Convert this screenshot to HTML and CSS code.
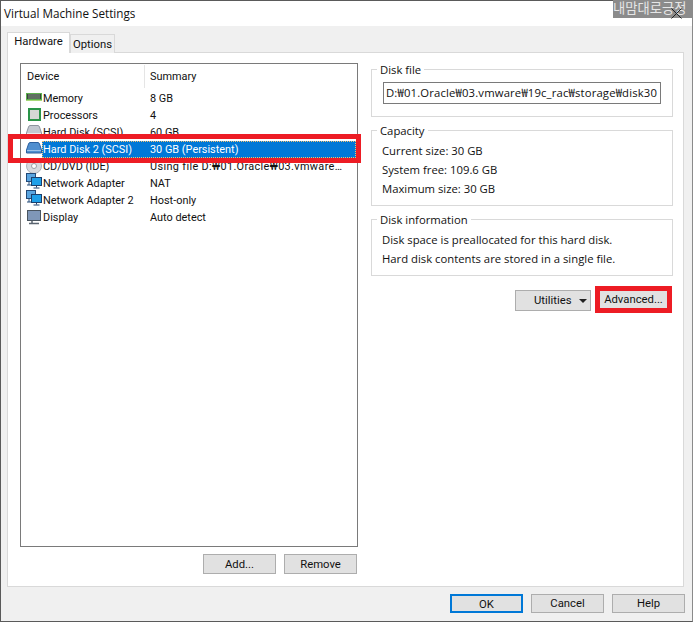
FILE: index.html
```html
<!DOCTYPE html>
<html lang="ko">
<head>
<meta charset="utf-8">
<title>Virtual Machine Settings</title>
<link rel="stylesheet" href="styles.css">
</head>
<body>
<div class="window">
  <div class="titlebar">Virtual Machine Settings</div>
  <div class="tabs">
    <div class="tab tab-active">Hardware</div>
    <div class="tab">Options</div>
  </div>
  <div class="pane">
    <div class="left">
      <div class="list">
        <div class="list-head">
          <div class="head-device">Device</div>
          <div class="head-summary">Summary</div>
        </div>
        <div class="row">
          <svg class="icon" viewBox="0 0 16 16"><rect x="0" y="3" width="16" height="8" fill="#5cb04c"/><rect x="1" y="4" width="14" height="5" fill="#36443a"/><path d="M3 4v5M5 4v5M7 4v5M9 4v5M11 4v5M13 4v5" stroke="#8b9a8b"/><path d="M0 10.500h16" stroke="#a8d878"/></svg>
          <div class="cells"><span class="name">Memory</span><span class="summary">8 GB</span></div>
        </div>
        <div class="row">
          <svg class="icon" viewBox="0 0 16 16"><rect x="2" y="1" width="13" height="13" fill="#2a9448"/><rect x="4" y="3" width="9" height="9" fill="#d4d8d4"/></svg>
          <div class="cells"><span class="name">Processors</span><span class="summary">4</span></div>
        </div>
        <div class="row">
          <svg class="icon" viewBox="0 0 16 16"><path d="M4 1.500h8q1 0 1.500 1.500l2 6v3H.5V9l2-6q.5-1.500 1.500-1.500z" fill="#c3c8d0" stroke="#8d949e"/><path d="M1 9.500h14" stroke="#e9ebee"/></svg>
          <div class="cells"><span class="name">Hard Disk (SCSI)</span><span class="summary">60 GB</span></div>
        </div>
        <div class="row row-selected">
          <svg class="icon" viewBox="0 0 16 16"><path d="M4 1.500h8q1 0 1.500 1.500l2 6v3H.5V9l2-6q.5-1.500 1.500-1.500z" fill="#4f8fd0" stroke="#2a5f9e"/><path d="M1 9.500h14" stroke="#9cc4ea"/></svg>
          <div class="cells"><span class="name">Hard Disk 2 (SCSI)</span><span class="summary">30 GB (Persistent)</span></div>
        </div>
        <div class="row">
          <svg class="icon" viewBox="0 0 16 16"><circle cx="8" cy="8" r="7.500" fill="#d8dade" stroke="#aeb2b8"/><circle cx="8" cy="8" r="2.500" fill="#fff" stroke="#9a9ea4"/></svg>
          <div class="cells"><span class="name">CD/DVD (IDE)</span><span class="summary summary-long">Using file D:₩01.Oracle₩03.vmware…</span></div>
        </div>
        <div class="row">
          <svg class="icon icon-net" viewBox="0 0 16 16"><rect x="0.500" y="0.500" width="9" height="8" fill="#5aa5e0" stroke="#234a78"/><path d="M3 9v3M1 12h6" stroke="#234a78"/><rect x="5.500" y="4.500" width="10" height="8" fill="#1f9fe8" stroke="#1c3f6c"/><path d="M10.500 13v1.500M7.500 15h6" stroke="#1c3f6c"/></svg>
          <div class="cells"><span class="name">Network Adapter</span><span class="summary">NAT</span></div>
        </div>
        <div class="row">
          <svg class="icon icon-net" viewBox="0 0 16 16"><rect x="0.500" y="0.500" width="9" height="8" fill="#5aa5e0" stroke="#234a78"/><path d="M3 9v3M1 12h6" stroke="#234a78"/><rect x="5.500" y="4.500" width="10" height="8" fill="#1f9fe8" stroke="#1c3f6c"/><path d="M10.500 13v1.500M7.500 15h6" stroke="#1c3f6c"/></svg>
          <div class="cells"><span class="name">Network Adapter 2</span><span class="summary">Host-only</span></div>
        </div>
        <div class="row">
          <svg class="icon" viewBox="0 0 16 16"><rect x="1.500" y="1.500" width="13" height="10" fill="#7f97b8" stroke="#4a5560"/><path d="M6 12v2M3 14.500h10" stroke="#5a6470" stroke-width="1.500"/></svg>
          <div class="cells"><span class="name">Display</span><span class="summary">Auto detect</span></div>
        </div>
      </div>
      <div class="list-actions">
        <button class="btn">Add...</button>
        <button class="btn">Remove</button>
      </div>
    </div>
    <div class="right">
      <fieldset class="group group-file">
        <legend>Disk file</legend>
        <div class="path">D:₩01.Oracle₩03.vmware₩19c_rac₩storage₩disk30</div>
      </fieldset>
      <fieldset class="group group-capacity">
        <legend>Capacity</legend>
        <div class="line">Current size: 30 GB</div>
        <div class="line">System free: 109.6 GB</div>
        <div class="line">Maximum size: 30 GB</div>
      </fieldset>
      <fieldset class="group group-info">
        <legend>Disk information</legend>
        <div class="line">Disk space is preallocated for this hard disk.</div>
        <div class="line">Hard disk contents are stored in a single file.</div>
      </fieldset>
      <div class="disk-actions">
        <button class="btn btn-utilities">Utilities<span class="caret"></span></button>
        <button class="btn btn-advanced">Advanced...</button>
      </div>
    </div>
  </div>
  <div class="footer">
    <button class="btn btn-default">OK</button>
    <button class="btn">Cancel</button>
    <button class="btn">Help</button>
  </div>
  <div class="highlight"></div>
  <div class="watermark">내맘대로긍정</div>
  <svg class="close" viewBox="0 0 11 11"><path d="M.5.5l10 10M10.500.5l-10 10" stroke="#222" fill="none"/></svg>
</div>
</body>
</html>
```
FILE: styles.css
```css
* { box-sizing: border-box; }
html, body { margin: 0; padding: 0; }
body {
  width: 693px;
  height: 622px;
  overflow: hidden;
  font-family: "Open Sans", "Noto Sans CJK KR", sans-serif;
  font-size: 11.3px;
  color: #111;
}
.window {
  position: relative;
  width: 693px;
  height: 622px;
  display: flex;
  flex-direction: column;
  background: #f0f0f0;
  border: 1px solid #5a5a5a;
  border-right-color: #8a8a8a;
}
.titlebar {
  height: 25px;
  background: #fff;
  padding-left: 3px;
  line-height: 24px;
  font-size: 11.700px;
}
.tabs {
  display: flex;
  align-items: flex-end;
  height: 21px;
  margin-top: 6px;
  padding-left: 6px;
  position: relative;
  z-index: 1;
  font-family: Roboto, sans-serif;
  font-size: 11.300px;
}
.tab {
  height: 19px;
  width: 45px;
  margin-left: -1px;
  border: 1px solid #d9d9d9;
  border-bottom: 0;
  background: #f0f0f0;
  text-align: center;
  line-height: 20px;
}
.tab-active {
  height: 21px;
  width: 63px;
  margin-left: 0;
  margin-right: 1px;
  background: #fff;
  line-height: 18px;
}
.pane {
  width: 677px;
  height: 535px;
  margin-left: 6px;
  margin-top: -1px;
  padding: 7px 0 0 12px;
  background: #fff;
  border: 1px solid #d9d9d9;
  display: flex;
  gap: 13px;
}
.left { width: 338px; margin-top: 3px; }
.list {
  height: 484px;
  border: 1px solid #7a7a7a;
  background: #fff;
  font-family: Roboto, sans-serif;
  font-size: 10.900px;
}
.list-head { display: flex; height: 26px; padding-top: 1px; }
.head-device {
  width: 124px;
  height: 23px;
  padding-left: 6px;
  line-height: 24px;
  border-right: 1px solid #e5e5e5;
}
.head-summary { padding-left: 5px; line-height: 24px; }
.row {
  display: flex;
  height: 17px;
  padding-left: 5px;
  padding-right: 1px;
  line-height: 18px;
  white-space: nowrap;
}
.icon { width: 16px; height: 16px; flex: none; }
.icon-net { margin-top: -2px; }
.cells { display: flex; flex: 1; min-width: 0; height: 17px; }
.name { width: 108px; padding-left: 1px; }
.summary-long { letter-spacing: 0.350px; }
.row-selected .cells {
  background: #0078d7;
  color: #fff;
  outline: 1px dotted #f0c070;
  outline-offset: -1px;
}
.list-actions {
  display: flex;
  justify-content: flex-end;
  gap: 8px;
  margin-top: 7px;
  padding-right: 1px;
}
.btn {
  width: 73px;
  height: 20px;
  padding: 0;
  font-family: Roboto, sans-serif;
  font-size: 11.300px;
  color: inherit;
  background: #e1e1e1;
  border: 1px solid #adadad;
  line-height: 17px;
}
.right { width: 302px; }
.group {
  margin: 0;
  padding: 4px 0 0 11px;
  border: 1px solid #d9d9d9;
  min-width: 0;
}
.group legend {
  margin-left: -6px;
  padding: 2px 3px 0;
  line-height: 16px;
}
.group-file { height: 57px; }
.path {
  width: 278px;
  height: 22px;
  padding-left: 2px;
  border: 1px solid #7a7a7a;
  line-height: 20px;
  white-space: nowrap;
  overflow: hidden;
  letter-spacing: 0.160px;
}
.group-capacity { margin-top: 4px; height: 85px; padding-top: 2px; padding-left: 10px; }
.group-capacity legend, .group-info legend { margin-left: -5px; }
.group-info { margin-top: 4px; height: 66px; padding-top: 2px; padding-left: 10px; }
.line { height: 19px; line-height: 19px; }
.disk-actions {
  display: flex;
  align-items: flex-start;
  justify-content: flex-end;
  gap: 4px;
  margin-top: 10px;
  padding-right: 1px;
}
.btn-utilities { width: 76px; height: 21px; margin-top: 4px; text-align: left; padding-left: 18px; }
.caret {
  display: inline-block;
  margin-left: 7px;
  vertical-align: 1px;
  border: 4px solid transparent;
  border-top: 4px solid #222;
  border-bottom: 0;
}
.btn-advanced {
  width: 77px;
  height: 27px;
  border: 5px solid #ed1c24;
  line-height: 15px;
}
.footer {
  display: flex;
  justify-content: flex-end;
  gap: 8px;
  padding: 7px 7px 0 0;
}
.footer .btn { height: 19px; }
.btn-default { border: 2px solid #0078d7; }
.highlight {
  position: absolute;
  left: 7px;
  top: 133px;
  width: 353px;
  height: 29px;
  border: 5px solid #ed1c24;
}
.watermark {
  position: absolute;
  top: -1px;
  right: -1px;
  width: 80px;
  height: 18px;
  background: #8b8b8b;
  color: #e6e6e6;
  font-size: 13.300px;
  line-height: 17px;
  white-space: nowrap;
  overflow: hidden;
}
.close {
  position: absolute;
  top: 7px;
  right: 10px;
  width: 11px;
  height: 11px;
}
```
